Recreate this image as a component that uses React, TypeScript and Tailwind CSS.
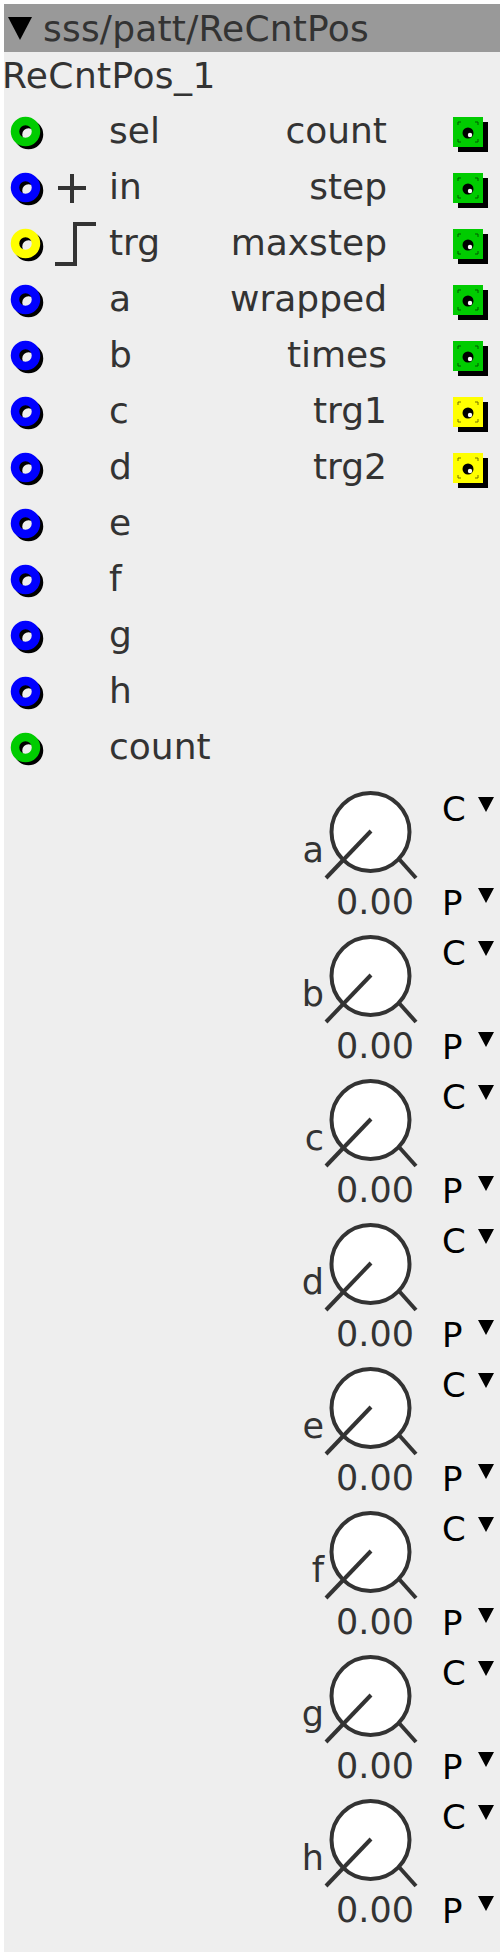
import React from 'react';

type Inlet = { name: string; color: string; symbol?: 'plus' | 'step' };
type Outlet = { name: string; color: string };

const inlets: Inlet[] = [
    { name: 'sel', color: '#00cc00' },
    { name: 'in', color: '#0000ff', symbol: 'plus' },
    { name: 'trg', color: '#ffff00', symbol: 'step' },
    { name: 'a', color: '#0000ff' },
    { name: 'b', color: '#0000ff' },
    { name: 'c', color: '#0000ff' },
    { name: 'd', color: '#0000ff' },
    { name: 'e', color: '#0000ff' },
    { name: 'f', color: '#0000ff' },
    { name: 'g', color: '#0000ff' },
    { name: 'h', color: '#0000ff' },
    { name: 'count', color: '#00cc00' },
];

const outlets: Outlet[] = [
    { name: 'count', color: '#00cc00' },
    { name: 'step', color: '#00cc00' },
    { name: 'maxstep', color: '#00cc00' },
    { name: 'wrapped', color: '#00cc00' },
    { name: 'times', color: '#00cc00' },
    { name: 'trg1', color: '#ffff00' },
    { name: 'trg2', color: '#ffff00' },
];

const knobs = ['a', 'b', 'c', 'd', 'e', 'f', 'g', 'h'];

const InletJack: React.FC<{ color: string }> = ({ color }) => (
    <svg width="38" height="56" viewBox="0 0 38 56" className="shrink-0">
        <circle cx="18.5" cy="29.5" r="10.5" fill="none" stroke="#000" strokeWidth="8.5" />
        <circle cx="15.5" cy="26.5" r="10.5" fill="none" stroke={color} strokeWidth="8.5" />
    </svg>
);

const OutletJack: React.FC<{ color: string }> = ({ color }) => (
    <svg width="36" height="36" viewBox="0 0 36 36" className="shrink-0">
        <rect x="5" y="5" width="30" height="30" fill="#000" />
        <rect x="0" y="0" width="30" height="30" fill={color} />
        <g stroke="#000" strokeWidth="1" opacity="0.55" fill="none">
            <path d="M5 8 V5 H8" />
            <path d="M22 5 H25 V8" />
            <path d="M5 22 V25 H8" />
            <path d="M22 25 H25 V22" />
        </g>
        <circle cx="15" cy="16" r="5.5" fill="#000" />
        <circle cx="17" cy="18" r="2.2" fill="#fff" />
    </svg>
);

const Symbol: React.FC<{ kind?: 'plus' | 'step' }> = ({ kind }) => (
    <svg width="46" height="56" viewBox="0 0 46 56" className="shrink-0">
        {kind === 'plus' && (
            <g stroke="#333" strokeWidth="4">
                <line x1="6" y1="27" x2="34" y2="27" />
                <line x1="20" y1="13" x2="20" y2="42" />
            </g>
        )}
        {kind === 'step' && (
            <polyline points="3,47 23,47 23,7 44,7" fill="none" stroke="#333" strokeWidth="4" />
        )}
    </svg>
);

const Tri: React.FC<{ className?: string }> = ({ className }) => (
    <svg width="16" height="15" viewBox="0 0 16 15" className={className}>
        <polygon points="0,0 16,0 8,15" fill="#000" />
    </svg>
);

const Knob: React.FC<{ label: string }> = ({ label }) => (
    <div className="flex h-[144px] pl-[296px] text-[35px]">
        <div className="flex flex-col w-[120px]">
            <div className="flex items-end h-[106px] pt-[10px]">
                <span className="w-[24px] -mr-[2px] text-right leading-[41px] mb-[12px]">{label}</span>
                <svg width="96" height="96" viewBox="0 0 96 96" className="shrink-0">
                    <circle cx="48.5" cy="45" r="39" fill="#fff" stroke="#333" strokeWidth="4" />
                    <line x1="49" y1="44" x2="4" y2="91" stroke="#333" strokeWidth="4" />
                    <line x1="77" y1="72" x2="94" y2="91" stroke="#333" strokeWidth="4" />
                </svg>
            </div>
            <div className="text-right leading-[41px] -mt-[1px] pr-[6px]">0.00</div>
        </div>
        <div className="ml-[22px] flex flex-col text-black text-[34px]">
            <div className="flex items-start mt-[15px] leading-[34px]">
                <span>C</span>
                <Tri className="ml-[12px] mt-[5px]" />
            </div>
            <div className="flex items-start mt-[60px] leading-[34px]">
                <span>P</span>
                <Tri className="ml-[15px] mt-[2px]" />
            </div>
        </div>
    </div>
);

export default function App() {
    return (
        <div className="min-h-screen bg-white p-[4px] font-['DejaVu_Sans',sans-serif] text-[36px] text-[#333]">
            <div className="w-[496px] bg-[#eeeeee] pb-[23px]">
                <div className="flex items-center h-[48px] bg-[#999999]">
                    <svg width="24" height="23" viewBox="0 0 24 23" className="ml-[4px] shrink-0">
                        <polygon points="0,0 24,0 12,23" fill="#000" />
                    </svg>
                    <span className="ml-[11px] leading-[41px] tracking-[0.2px]">sss/patt/ReCntPos</span>
                </div>
                <div className="h-[53px] pt-[3px] -ml-[2px] leading-[41px] tracking-[0.4px]">ReCntPos_1</div>
                <div className="flex flex-col">
                    {inlets.map((inlet, i) => (
                        <div key={i} className="grid grid-cols-[105px_1fr_auto_113px] h-[56px]">
                            <div className="flex">
                                <div className="ml-[6px]">
                                    <InletJack color={inlet.color} />
                                </div>
                                <div className="ml-[4px]">
                                    <Symbol kind={inlet.symbol} />
                                </div>
                            </div>
                            <span className="leading-[52px]">{inlet.name}</span>
                            <span className="leading-[52px] text-right">{outlets[i]?.name}</span>
                            <div className="flex items-start pt-[12px] pl-[66px]">
                                {outlets[i] && <OutletJack color={outlets[i].color} />}
                            </div>
                        </div>
                    ))}
                </div>
                {knobs.map((k) => (
                    <Knob key={k} label={k} />
                ))}
            </div>
        </div>
    );
}
